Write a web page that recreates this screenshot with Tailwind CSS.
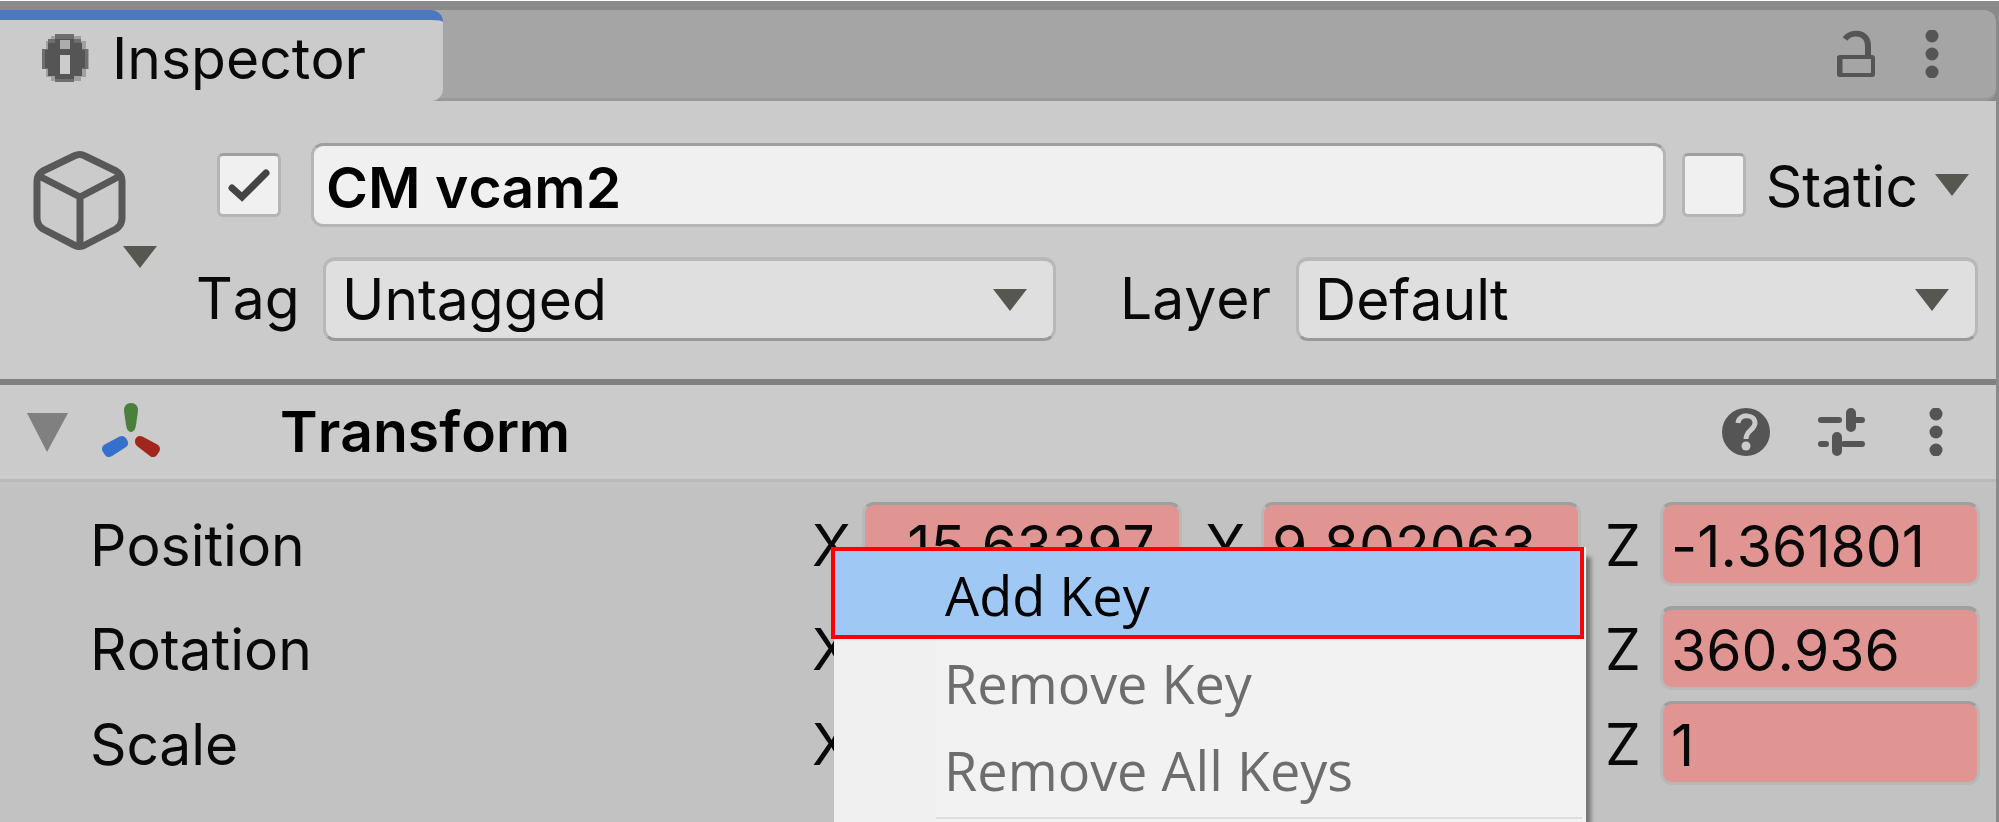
<!DOCTYPE html>
<html lang="en">
<head>
    <meta charset="UTF-8">
    <meta name="viewport" content="width=device-width, initial-scale=1.0">
    <title>Inspector</title>
    <script src="https://cdn.jsdelivr.net/npm/@tailwindcss/browser@4"></script>
</head>
<body class="min-h-screen flex flex-col overflow-hidden bg-[#c2c2c2] border-t border-white font-['Inter',sans-serif] [font-kerning:none] [font-variant-ligatures:none] text-[57px] leading-16 text-[#090909]">

<div class="relative grow flex flex-col border-r-3 border-[#8a8a8a]">

    <!-- Tab bar -->
    <header class="h-25 shrink-0 flex justify-between bg-[#8a8a8a] pt-[9px]">
        <div class="grow flex justify-between rounded-r-xl bg-[#a5a5a5] border-b-3 border-[#999999]">
            <div class="w-[443px] -mb-[3px] flex items-center gap-5 pl-10 pb-1 rounded-r-xl bg-[#cbcbcb] border-t-10 border-[#4c78c1]">
                <svg class="size-13" viewBox="0 0 52 52" shape-rendering="crispEdges">
                    <path fill="#a0a0a0" d="M11 3h30v5h5v8h3v20h-3v8h-5v4H11v-4H6v-8H2V16h4V8h5z"/>
                    <path fill="#6e6e6e" d="M15 1h19v5h7v10h7v20h-7v7h-7v6H15v-6H8v-7H2V16h6V6h7z"/>
                    <path fill="#555" d="M15 6h19v4h8v7h3v18h-3v8h-8v3H15v-3H8v-8H5V17h3v-7h7z"/>
                    <path fill="#acacac" d="M20 7h10v9H20z"/>
                    <path fill="#cbcbcb" d="M20 22h10v19H20z"/>
                </svg>
                <h1>Inspector</h1>
            </div>
            <div class="flex items-center gap-12 pr-14">
                <button type="button" aria-label="Lock" class="block">
                    <svg class="w-10 h-12" viewBox="0 0 40 48" fill="none" stroke="#555">
                        <path stroke-width="6" d="M9 9c6-8 23-8 23 7v11"/>
                        <path stroke-width="5" d="M4 26v20"/>
                        <rect x="3" y="27" width="34" height="18" rx="1" stroke-width="4"/>
                    </svg>
                </button>
                <button type="button" aria-label="Tab menu" class="block">
                    <svg class="w-4 h-12" viewBox="0 0 16 48" fill="#555">
                        <circle cx="8" cy="6" r="6.5"/><circle cx="8" cy="24" r="6.5"/><circle cx="8" cy="42" r="6.5"/>
                    </svg>
                </button>
            </div>
        </div>
    </header>

    <!-- GameObject header -->
    <section class="h-[284px] shrink-0 flex bg-[#cbcbcb] border-b-6 border-[#808080] pl-8 pr-4 pt-[42px]">
        <button type="button" aria-label="Select icon" class="w-32 h-32 shrink-0">
            <svg class="w-32 h-32" viewBox="0 0 128 128">
                <path fill="none" stroke="#585858" stroke-width="7" stroke-linejoin="round" d="M42 13q6-3 11 0l31 15q6 4 6 10v37q0 7-6 11l-31 16q-5 3-11 0L11 86q-6-4-6-11V38q0-6 6-10zM7 33l41 21l40-21M48 54v49"/>
                <path fill="#565850" d="M91 103h34l-17 22z"/>
            </svg>
        </button>
        <div class="grow flex flex-col gap-[30px]">
            <div class="flex items-center pl-[57px]">
                <label class="relative flex">
                    <input type="checkbox" checked aria-label="Active" class="appearance-none size-16 rounded-md bg-[#f0f0f0] border-3 border-[#b5b5b5] border-t-[#9f9f9f]">
                    <svg class="absolute inset-0 size-16" viewBox="0 0 64 64" fill="none" stroke="#444" stroke-width="7" stroke-linecap="round" stroke-linejoin="miter"><path d="M15 35l10 9l24-24"/></svg>
                </label>
                <input type="text" value="CM vcam2" aria-label="Name" class="grow min-w-0 h-21 ml-[30px] px-3 pt-1 rounded-xl bg-[#f0f0f0] border-3 border-[#b5b5b5] border-t-[#9f9f9f] font-semibold text-black">
                <input type="checkbox" id="static" class="appearance-none size-16 ml-4 rounded-md bg-[#f0f0f0] border-3 border-[#b5b5b5] border-t-[#9f9f9f]">
                <label for="static" class="pl-5 pt-1">Static</label>
                <button type="button" aria-label="Static flags" class="block ml-4 mr-2.5">
                    <svg class="w-9 h-6" viewBox="0 0 36 24"><path fill="#565850" d="M1 1h34L18 23z"/></svg>
                </button>
            </div>
            <div class="flex items-center pl-9">
                <label for="tag" class="w-[127px]">Tag</label>
                <div class="relative grow-[733] basis-0 flex">
                    <select id="tag" class="appearance-none w-full h-21 px-4 rounded-xl bg-[#dfdfdf] border-3 border-t-4 border-[#b8b8b8] border-b-[#999999]">
                        <option>Untagged</option>
                    </select>
                    <svg class="pointer-events-none absolute right-7 top-7 w-9 h-7" viewBox="0 0 36 28"><path fill="#565850" d="M1 4h34L18 26z"/></svg>
                </div>
                <label for="layer" class="w-60 pl-16">Layer</label>
                <div class="relative grow-[682] basis-0 flex mr-0.5">
                    <select id="layer" class="appearance-none w-full h-21 px-4 rounded-xl bg-[#dfdfdf] border-3 border-t-4 border-[#b8b8b8] border-b-[#999999]">
                        <option>Default</option>
                    </select>
                    <svg class="pointer-events-none absolute right-7 top-7 w-9 h-7" viewBox="0 0 36 28"><path fill="#565850" d="M1 4h34L18 26z"/></svg>
                </div>
            </div>
        </div>
    </section>

    <!-- Transform header -->
    <section class="h-[97px] shrink-0 flex items-center bg-[#cbcbcb] border-b-3 border-[#b8b8b8] pl-6 pr-13">
        <button type="button" aria-label="Collapse" class="block mr-7">
            <svg class="size-12" viewBox="0 0 48 48"><path fill="#808080" d="M3 5h41L23 44z"/></svg>
        </button>
        <svg class="w-16 h-15" viewBox="0 0 64 60" stroke-linejoin="round" stroke-width="10">
            <path fill="#4a7f3c" d="M24 9q0-8 7-8t7 8l-2 14q-1 7-5 7t-5-7z"/>
            <path fill="#3470cc" stroke="#3470cc" d="M22 39l1 2L9 50l-2-3z"/>
            <path fill="#a3261d" stroke="#a3261d" d="M40 39l15 8l-2 3l-13-10z"/>
        </svg>
        <h2 class="grow pl-29 font-semibold text-black">Transform</h2>
        <div class="flex items-center gap-11">
            <button type="button" aria-label="Help" class="block">
                <svg class="size-13" viewBox="0 0 52 52">
                    <circle cx="26" cy="26" r="24" fill="#555"/>
                    <path fill="none" stroke="#cbcbcb" stroke-width="5" d="M18 17c1-10 17-9 17 0c0 7-9 7-9 16"/>
                    <circle cx="26" cy="40" r="4.500" fill="#cbcbcb"/>
                </svg>
            </button>
            <button type="button" aria-label="Presets" class="block">
                <svg class="size-13" viewBox="0 0 52 52" fill="none" stroke="#555" stroke-linecap="round">
                    <path stroke-width="6" d="M5 14h18M40 14h6M5 38h5M28 38h18"/>
                    <path stroke-width="10" d="M35 7v14M21 31v14"/>
                </svg>
            </button>
            <button type="button" aria-label="Component menu" class="block ml-4">
                <svg class="w-4 h-12" viewBox="0 0 16 48" fill="#555">
                    <circle cx="8" cy="6" r="6.5"/><circle cx="8" cy="24" r="6.5"/><circle cx="8" cy="42" r="6.5"/>
                </svg>
            </button>
        </div>
    </section>

    <!-- Transform values -->
    <section class="flex flex-col pt-5 pl-[90px] pr-4">
        <div class="grid grid-cols-[722px_50px_1fr_79px_1fr_79px_1fr] items-center mb-5">
            <span class="pt-1">Position</span>
            <label for="px" class="pt-1">X</label>
            <input id="px" type="text" value="-15.63397" class="w-full h-21 px-4 pt-1 rounded-xl bg-[#e09592] border-3 border-[#b8b8b8] border-t-[#9f9f9f]">
            <label for="py" class="pl-6 pt-1">Y</label>
            <input id="py" type="text" value="9.802063" class="w-full h-21 px-2 pt-1 rounded-xl bg-[#e09592] border-3 border-[#b8b8b8] border-t-[#9f9f9f]">
            <label for="pz" class="pl-6 pt-1">Z</label>
            <input id="pz" type="text" value="-1.361801" class="w-full h-21 px-2 pt-1 rounded-xl bg-[#e09592] border-3 border-[#b8b8b8] border-t-[#9f9f9f]">
        </div>
        <div class="grid grid-cols-[722px_50px_1fr_79px_1fr_79px_1fr] items-center mb-[11px]">
            <span class="pt-1">Rotation</span>
            <label for="rx" class="pt-1">X</label>
            <input id="rx" type="text" class="w-full h-21 px-2 pt-1 rounded-xl bg-[#e09592] border-3 border-[#b8b8b8] border-t-[#9f9f9f]">
            <label for="ry" class="pl-6 pt-1">Y</label>
            <input id="ry" type="text" class="w-full h-21 px-2 pt-1 rounded-xl bg-[#e09592] border-3 border-[#b8b8b8] border-t-[#9f9f9f]">
            <label for="rz" class="pl-6 pt-1">Z</label>
            <input id="rz" type="text" value="360.936" class="w-full h-21 px-2 pt-1 rounded-xl bg-[#e09592] border-3 border-t-4 border-[#b8b8b8] border-t-[#9f9f9f]">
        </div>
        <div class="grid grid-cols-[722px_50px_1fr_79px_1fr_79px_1fr] items-center">
            <span class="pt-1">Scale</span>
            <label for="sx" class="pt-1">X</label>
            <input id="sx" type="text" class="w-full h-21 px-2 pt-1 rounded-xl bg-[#e09592] border-3 border-[#b8b8b8] border-t-[#9f9f9f]">
            <label for="sy" class="pl-6 pt-1">Y</label>
            <input id="sy" type="text" class="w-full h-21 px-2 pt-1 rounded-xl bg-[#e09592] border-3 border-[#b8b8b8] border-t-[#9f9f9f]">
            <label for="sz" class="pl-6 pt-1">Z</label>
            <input id="sz" type="text" value="1" class="w-full h-21 px-2 pt-1 rounded-xl bg-[#e09592] border-3 border-[#b8b8b8] border-t-[#9f9f9f]">
        </div>
    </section>

    <!-- Context menu -->
    <div class="absolute left-[831px] top-[546px] bottom-0 w-[755px] pl-[3px]">
        <div class="h-full flex flex-col bg-linear-to-r from-[#f0f0f0] from-[102px] to-[#f2f2f2] to-[102px] shadow-[5px_10px_4px_#777] font-['Open_Sans',sans-serif] text-[54px] text-[#6d6d6d]">
            <button type="button" class="h-[92px] shrink-0 -ml-[3px] mr-0.5 pl-[110px] pt-1 border-4 border-[#ff0000] bg-[#9fc9f4] text-left text-black">Add Key</button>
            <button type="button" disabled class="h-[87px] shrink-0 pl-[110px] text-left">Remove Key</button>
            <button type="button" disabled class="h-[87px] shrink-0 pl-[110px] text-left">Remove All Keys</button>
            <hr class="ml-[102px] mr-1 mt-1 border-t-2 border-[#dcdcdc]">
        </div>
    </div>
</div>

</body>
</html>
